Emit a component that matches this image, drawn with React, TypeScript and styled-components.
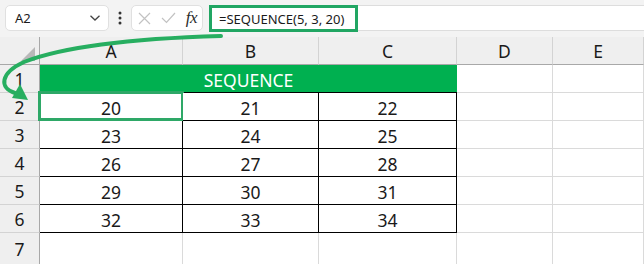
import React from "react";
import styled, { createGlobalStyle } from "styled-components";

const GlobalStyle = createGlobalStyle`
  html, body { margin: 0; padding: 0; background: #ffffff; }
  * { box-sizing: border-box; }
`;

const UI_FONT = `"Noto Sans", "Open Sans", "Liberation Sans", sans-serif`;

const Page = styled.div`
  position: relative;
  width: 644px;
  height: 264px;
  overflow: hidden;
  background: #ffffff;
  font-family: ${UI_FONT};
  color: #1a1a1a;
`;

/* ---------- formula toolbar ---------- */

const Toolbar = styled.div`
  display: flex;
  align-items: stretch;
  height: 37px;
  padding: 5px 0 6px 5px;
  background: #f3f3f3;
`;

const NameBox = styled.div`
  display: flex;
  align-items: center;
  justify-content: space-between;
  width: 104px;
  padding: 0 7px 0 9px;
  background: #ffffff;
  border: 1px solid #e0e0e0;
  border-radius: 5px;
  font-size: 13px;
`;

const Divider = styled.div`
  display: flex;
  align-items: center;
  justify-content: center;
  width: 22px;
`;

const ActionBox = styled.div`
  display: flex;
  align-items: center;
  justify-content: space-between;
  width: 72px;
  margin-right: 6px;
  padding: 0 5px 0 6px;
  background: #ffffff;
  border: 1px solid #e0e0e0;
  border-radius: 5px;
`;

const FxLabel = styled.span`
  font-family: "Liberation Serif", "DejaVu Serif", serif;
  font-style: italic;
  font-size: 17px;
  color: #2b2b2b;
  letter-spacing: -0.5px;
`;

const FormulaBar = styled.div`
  flex: 1;
  display: flex;
  align-items: stretch;
  background: #ffffff;
  border-top: 1px solid #dddddd;
  border-bottom: 1px solid #dddddd;
`;

const FormulaText = styled.div`
  display: flex;
  align-items: center;
  width: 149px;
  margin: -1px 0 -2px;
  padding-left: 7px;
  border: 3px solid #21a663;
  font-size: 13px;
  color: #1a1a1a;
  white-space: nowrap;
`;

/* ---------- worksheet grid ---------- */

const Sheet = styled.div`
  display: grid;
  grid-template-columns: 40px 143px 136px 138px 96px 91px;
  grid-template-rows: repeat(7, 28px) 31px;
  font-size: 17.5px;
`;

const Corner = styled.div`
  position: relative;
  background: #efefef;
  border-right: 1px solid #a8a8a8;
  border-bottom: 1px solid #a8a8a8;
`;

const ColHead = styled.div`
  display: flex;
  align-items: center;
  justify-content: center;
  background: #efefef;
  border-right: 1px solid #d3d3d3;
  border-bottom: 1px solid #a8a8a8;
`;

const RowHead = styled.div<{ $last?: boolean }>`
  display: flex;
  align-items: center;
  justify-content: center;
  padding-top: 1px;
  background: #efefef;
  border-right: 1px solid #a8a8a8;
  border-bottom: ${(p) => (p.$last ? "none" : "1px solid #d3d3d3")};
`;

const Cell = styled.div<{ $boxed?: boolean; $last?: boolean }>`
  position: relative;
  display: flex;
  align-items: center;
  justify-content: center;
  padding-top: 2px;
  background: #ffffff;
  border-right: 1px solid ${(p) => (p.$boxed ? "#000000" : "#dadada")};
  border-bottom: ${(p) =>
    p.$last ? "none" : `1px solid ${p.$boxed ? "#000000" : "#dadada"}`};
`;

const TitleCell = styled.div`
  grid-column: span 3;
  display: flex;
  align-items: center;
  justify-content: center;
  padding-top: 2px;
  background: #00b050;
  color: #ffffff;
  border-bottom: 1px solid #000000;
`;

const Selection = styled.div`
  position: absolute;
  top: -2px;
  left: -2px;
  right: -2px;
  bottom: -1px;
  border: 3px solid #2ea867;
  pointer-events: none;
`;

const CornerMark = styled.svg`
  position: absolute;
  left: 0;
  top: 0;
`;

const ArrowLayer = styled.svg`
  position: absolute;
  left: 0;
  top: 0;
  pointer-events: none;
`;

const COLUMNS = ["A", "B", "C", "D", "E"];
const DATA = [
  [20, 21, 22],
  [23, 24, 25],
  [26, 27, 28],
  [29, 30, 31],
  [32, 33, 34],
];

const Chevron = () => (
  <svg width="12" height="8" viewBox="0 0 12 8">
    <path d="M1.5 1.8 L6 6 L10.5 1.8" fill="none" stroke="#444" strokeWidth="1.3" />
  </svg>
);

const VerticalDots = () => (
  <svg width="4" height="14" viewBox="0 0 4 14">
    <circle cx="2" cy="2" r="1.5" fill="#333" />
    <circle cx="2" cy="7" r="1.5" fill="#333" />
    <circle cx="2" cy="12" r="1.5" fill="#333" />
  </svg>
);

const CancelIcon = () => (
  <svg width="13" height="13" viewBox="0 0 13 13">
    <path d="M1 1 L12 12 M12 1 L1 12" stroke="#c2c2c2" strokeWidth="1.2" />
  </svg>
);

const EnterIcon = () => (
  <svg width="15" height="12" viewBox="0 0 15 12">
    <path d="M1 6 L5.5 10.5 L14 1" fill="none" stroke="#c2c2c2" strokeWidth="1.2" />
  </svg>
);

export default function App() {
  return (
    <>
      <GlobalStyle />
      <Page>
        <Toolbar>
          <NameBox>
            <span>A2</span>
            <Chevron />
          </NameBox>
          <Divider>
            <VerticalDots />
          </Divider>
          <ActionBox>
            <CancelIcon />
            <EnterIcon />
            <FxLabel>fx</FxLabel>
          </ActionBox>
          <FormulaBar>
            <FormulaText>=SEQUENCE(5, 3, 20)</FormulaText>
          </FormulaBar>
        </Toolbar>

        <Sheet>
          <Corner>
            <CornerMark width="39" height="27" viewBox="0 0 39 27">
              <polygon points="35,10 35,24 21,24" fill="#b8b8b8" />
            </CornerMark>
          </Corner>
          {COLUMNS.map((c) => (
            <ColHead key={c}>{c}</ColHead>
          ))}

          <RowHead>1</RowHead>
          <TitleCell>SEQUENCE</TitleCell>
          <Cell />
          <Cell />

          {DATA.map((row, r) => (
            <React.Fragment key={r}>
              <RowHead>{r + 2}</RowHead>
              {row.map((v, i) => (
                <Cell key={i} $boxed>
                  {v}
                  {r === 0 && i === 0 && <Selection />}
                </Cell>
              ))}
              <Cell />
              <Cell />
            </React.Fragment>
          ))}

          <RowHead $last>7</RowHead>
          {COLUMNS.map((c) => (
            <Cell key={c} $last />
          ))}
        </Sheet>

        <ArrowLayer width="644" height="264" viewBox="0 0 644 264">
          <path
            d="M221 36 C150 38 70 44 24 62 C0 73 -1 88 15 93"
            fill="none"
            stroke="#27ae60"
            strokeWidth="4"
            strokeLinecap="round"
          />
          <polygon points="12,98 20,84 28,100" fill="#27ae60" />
        </ArrowLayer>
      </Page>
    </>
  );
}
